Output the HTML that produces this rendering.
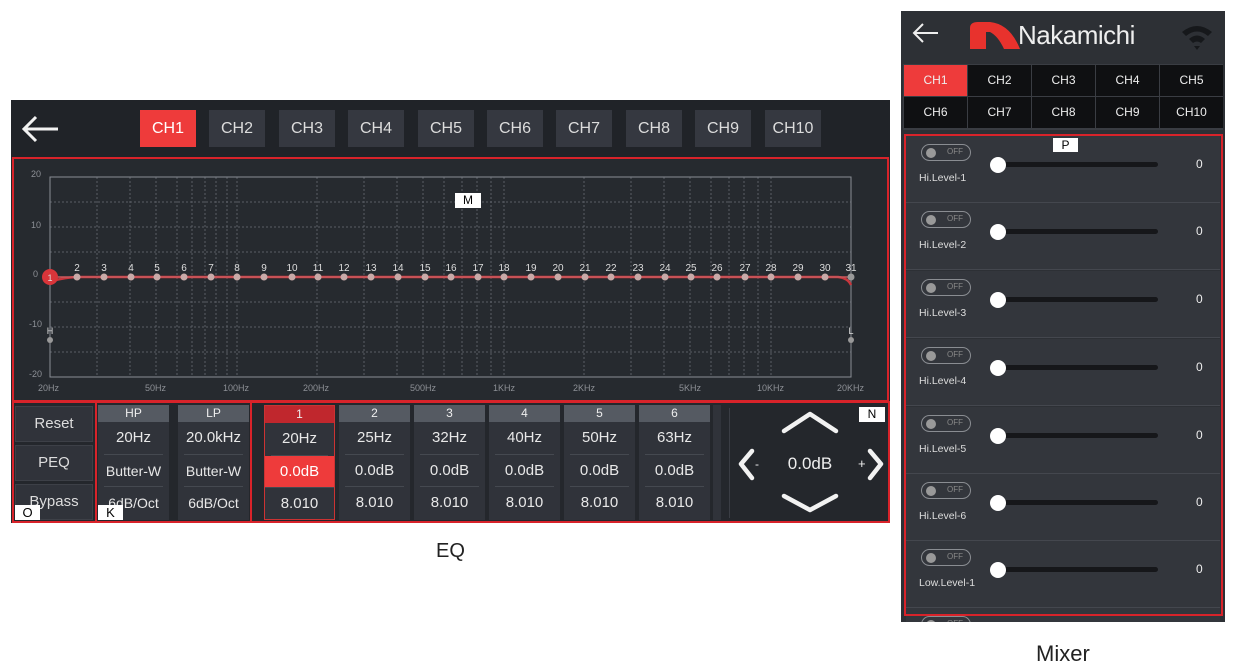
<!DOCTYPE html>
<html><head><meta charset="utf-8"><style>
*{margin:0;padding:0;box-sizing:border-box}
body{width:1233px;height:672px;background:#fff;position:relative;overflow:hidden;font-family:"Liberation Sans",sans-serif;color:#e6e6e6}
.a{position:absolute}
.ch{position:absolute;top:110px;width:56px;height:37px;background:#353840;font-size:16px;line-height:37px;text-align:center;color:#dcdcdc}
.btn{position:absolute;left:15px;width:78px;height:36px;background:#30333a;border:1px solid #3d4047;font-size:15px;line-height:34px;text-align:center;color:#ddd}
.col{position:absolute;top:405px;width:71px;height:115px;background:#30333a}
.col .h{height:17px;background:#555a62;font-size:12px;line-height:17px;text-align:center;color:#eee}
.col .r{height:32.5px;font-size:15px;line-height:32px;text-align:center;border-bottom:1px solid #454950;margin:0 6px;color:#e8e8e8}
.col .r.l{border:none}
.col .r.s{font-size:14px}
.mc{position:absolute;width:63px;height:31px;background:#0f1012;font-size:12px;line-height:31px;text-align:center;color:#eee}
.row{position:absolute;left:906px;width:314px;height:67px;background:#33363c;border-bottom:1px solid #44474e}
.tg{position:absolute;left:15px;top:8px;width:50px;height:17px;border:1.5px solid #8a8d92;border-radius:9px}
.tg i{position:absolute;left:4px;top:2.5px;width:10px;height:10px;border-radius:50%;background:#999}
.tg b{position:absolute;left:25px;top:2px;font-size:8px;font-weight:normal;color:#888}
.lb{position:absolute;left:13px;top:36px;font-size:10.5px;color:#ddd}
.tr{position:absolute;left:92px;top:26px;width:160px;height:5px;border-radius:3px;background:#16171a}
.kn{position:absolute;left:84px;top:21px;width:16px;height:16px;border-radius:50%;background:#fff}
.vl{position:absolute;left:290px;top:21px;font-size:12px;color:#eee}
</style></head><body>
<div class="a" style="left:11px;top:100px;width:879px;height:423px;background:#24272c"></div>
<div class="a" style="left:11px;top:100px;width:879px;height:57px;background:#202328"></div>
<svg class="a" style="left:22px;top:115px" width="38" height="28" viewBox="0 0 38 28"><path d="M2 14H36M14 2L2 14L14 26" fill="none" stroke="#f2f2f2" stroke-width="3"/></svg>
<div class="ch" style="left:140px;background:#ee3b3b;color:#fff">CH1</div>
<div class="ch" style="left:209px">CH2</div>
<div class="ch" style="left:279px">CH3</div>
<div class="ch" style="left:348px">CH4</div>
<div class="ch" style="left:418px">CH5</div>
<div class="ch" style="left:487px">CH6</div>
<div class="ch" style="left:556px">CH7</div>
<div class="ch" style="left:626px">CH8</div>
<div class="ch" style="left:695px">CH9</div>
<div class="ch" style="left:765px">CH10</div>
<div class="a" style="left:12px;top:157px;width:877px;height:245px;border:2px solid #d8232a;background:#262a2f"></div>

<svg class="a" style="left:0;top:0" width="1233" height="672">
<g stroke="#5a5e66" stroke-width="1" stroke-dasharray="2,2">
<line x1="50" y1="202" x2="851" y2="202"/><line x1="50" y1="227" x2="851" y2="227"/><line x1="50" y1="252" x2="851" y2="252"/><line x1="50" y1="302" x2="851" y2="302"/><line x1="50" y1="327" x2="851" y2="327"/><line x1="50" y1="352" x2="851" y2="352"/>
<line x1="97" y1="177" x2="97" y2="377"/><line x1="130" y1="177" x2="130" y2="377"/><line x1="156" y1="177" x2="156" y2="377"/><line x1="177" y1="177" x2="177" y2="377"/><line x1="192" y1="177" x2="192" y2="377"/><line x1="205" y1="177" x2="205" y2="377"/><line x1="216" y1="177" x2="216" y2="377"/><line x1="227" y1="177" x2="227" y2="377"/><line x1="237" y1="177" x2="237" y2="377"/>
<line x1="317" y1="177" x2="317" y2="377"/><line x1="364" y1="177" x2="364" y2="377"/><line x1="397" y1="177" x2="397" y2="377"/><line x1="423" y1="177" x2="423" y2="377"/><line x1="444" y1="177" x2="444" y2="377"/><line x1="462" y1="177" x2="462" y2="377"/><line x1="477" y1="177" x2="477" y2="377"/><line x1="491" y1="177" x2="491" y2="377"/><line x1="504" y1="177" x2="504" y2="377"/>
<line x1="584" y1="177" x2="584" y2="377"/><line x1="631" y1="177" x2="631" y2="377"/><line x1="664" y1="177" x2="664" y2="377"/><line x1="690" y1="177" x2="690" y2="377"/><line x1="711" y1="177" x2="711" y2="377"/><line x1="729" y1="177" x2="729" y2="377"/><line x1="744" y1="177" x2="744" y2="377"/><line x1="758" y1="177" x2="758" y2="377"/><line x1="771" y1="177" x2="771" y2="377"/>
</g>
<rect x="50" y="177" width="801" height="200" fill="none" stroke="#8a8e95" stroke-width="1"/>
<g font-size="9" fill="#8d9096" font-family="Liberation Sans"><text x="31" y="177">20</text><text x="31" y="228">10</text><text x="33" y="277">0</text><text x="29" y="327">-10</text><text x="29" y="377">-20</text>
<text x="38" y="391">20Hz</text><text x="145" y="391">50Hz</text><text x="223" y="391">100Hz</text><text x="303" y="391">200Hz</text><text x="410" y="391">500Hz</text><text x="493" y="391">1KHz</text><text x="573" y="391">2KHz</text><text x="679" y="391">5KHz</text><text x="757" y="391">10KHz</text><text x="837" y="391">20KHz</text></g>
<path d="M50 282 Q60 278 77 277 L838 277 Q848 278 851 285" fill="none" stroke="#c9363d" stroke-width="2.5"/>
<line x1="50" y1="277" x2="851" y2="277" stroke="#c85a5e" stroke-width="1.5"/>
<g fill="#c8aaa8">
<circle cx="77" cy="277" r="3.5"/><circle cx="104" cy="277" r="3.5"/><circle cx="131" cy="277" r="3.5"/><circle cx="157" cy="277" r="3.5"/><circle cx="184" cy="277" r="3.5"/><circle cx="211" cy="277" r="3.5"/><circle cx="237" cy="277" r="3.5"/><circle cx="264" cy="277" r="3.5"/><circle cx="292" cy="277" r="3.5"/><circle cx="318" cy="277" r="3.5"/><circle cx="344" cy="277" r="3.5"/><circle cx="371" cy="277" r="3.5"/><circle cx="398" cy="277" r="3.5"/><circle cx="425" cy="277" r="3.5"/><circle cx="451" cy="277" r="3.5"/><circle cx="478" cy="277" r="3.5"/><circle cx="504" cy="277" r="3.5"/><circle cx="531" cy="277" r="3.5"/><circle cx="558" cy="277" r="3.5"/><circle cx="585" cy="277" r="3.5"/><circle cx="611" cy="277" r="3.5"/><circle cx="638" cy="277" r="3.5"/><circle cx="665" cy="277" r="3.5"/><circle cx="691" cy="277" r="3.5"/><circle cx="717" cy="277" r="3.5"/><circle cx="745" cy="277" r="3.5"/><circle cx="771" cy="277" r="3.5"/><circle cx="798" cy="277" r="3.5"/><circle cx="825" cy="277" r="3.5"/><circle cx="851" cy="277" r="3.5" fill="#999"/>
<circle cx="50" cy="340" r="3" fill="#999"/><circle cx="851" cy="340" r="3" fill="#999"/></g>
<circle cx="50" cy="277" r="8" fill="#d9353a"/>
<g font-size="10" fill="#ddd" font-family="Liberation Sans" text-anchor="middle">
<text x="50" y="281" font-size="9">1</text><text x="77" y="271">2</text><text x="104" y="271">3</text><text x="131" y="271">4</text><text x="157" y="271">5</text><text x="184" y="271">6</text><text x="211" y="271">7</text><text x="237" y="271">8</text><text x="264" y="271">9</text><text x="292" y="271">10</text><text x="318" y="271">11</text><text x="344" y="271">12</text><text x="371" y="271">13</text><text x="398" y="271">14</text><text x="425" y="271">15</text><text x="451" y="271">16</text><text x="478" y="271">17</text><text x="504" y="271">18</text><text x="531" y="271">19</text><text x="558" y="271">20</text><text x="585" y="271">21</text><text x="611" y="271">22</text><text x="638" y="271">23</text><text x="665" y="271">24</text><text x="691" y="271">25</text><text x="717" y="271">26</text><text x="745" y="271">27</text><text x="771" y="271">28</text><text x="798" y="271">29</text><text x="825" y="271">30</text><text x="851" y="271">31</text>
<text x="50" y="334" font-size="9">H</text><text x="851" y="334" font-size="9">L</text></g>
</svg>
<div class="a" style="left:455px;top:193px;width:26px;height:15px;background:#fff;color:#000;font-size:12px;line-height:15px;text-align:center">M</div>

<div class="a" style="left:12px;top:401px;width:878px;height:122px;border:2px solid #d8232a"></div>
<div class="a" style="left:95px;top:401px;width:2px;height:121px;background:#d8232a"></div>
<div class="a" style="left:250px;top:401px;width:2px;height:121px;background:#d8232a"></div>
<div class="btn" style="top:406px">Reset</div>
<div class="btn" style="top:445px">PEQ</div>
<div class="btn" style="top:484px">Bypass</div>
<div class="col" style="left:98px"><div class="h">HP</div><div class="r">20Hz</div><div class="r s">Butter-W</div><div class="r l s">6dB/Oct</div></div>
<div class="col" style="left:178px"><div class="h">LP</div><div class="r">20.0kHz</div><div class="r s">Butter-W</div><div class="r l s">6dB/Oct</div></div>
<div class="a" style="left:15px;top:505px;width:25px;height:15px;background:#fff;color:#000;font-size:13px;line-height:15px;text-align:center">O</div>
<div class="a" style="left:98px;top:505px;width:25px;height:15px;background:#fff;color:#000;font-size:13px;line-height:15px;text-align:center">K</div>
<div class="col" style="left:264px;border:1px solid #c33"><div class="h" style="background:#c0272d">1</div><div class="r">20Hz</div><div class="r" style="background:#ee3b3b;margin:0;color:#fff">0.0dB</div><div class="r l">8.010</div></div>
<div class="col" style="left:339px"><div class="h">2</div><div class="r">25Hz</div><div class="r">0.0dB</div><div class="r l">8.010</div></div>
<div class="col" style="left:414px"><div class="h">3</div><div class="r">32Hz</div><div class="r">0.0dB</div><div class="r l">8.010</div></div>
<div class="col" style="left:489px"><div class="h">4</div><div class="r">40Hz</div><div class="r">0.0dB</div><div class="r l">8.010</div></div>
<div class="col" style="left:564px"><div class="h">5</div><div class="r">50Hz</div><div class="r">0.0dB</div><div class="r l">8.010</div></div>
<div class="col" style="left:639px"><div class="h">6</div><div class="r">63Hz</div><div class="r">0.0dB</div><div class="r l">8.010</div></div>
<div class="a" style="left:713px;top:405px;width:8px;height:115px;background:#30333a"></div>
<div class="a" style="left:729px;top:408px;width:1px;height:110px;background:#3a3d44"></div>
<svg class="a" style="left:730px;top:405px" width="158" height="115">
<g fill="none" stroke="#f2f2f2" stroke-width="4.5" stroke-linecap="round" stroke-linejoin="round"><path d="M54 26L80 9L106 26"/><path d="M54 91L80 105L106 91"/><path d="M22 46L11 59L22 73"/><path d="M140 46L151 59L140 73"/></g>
<text x="25" y="63" font-size="12" fill="#eee" font-family="Liberation Sans">-</text><text x="128" y="63" font-size="13" fill="#eee" font-family="Liberation Sans">+</text>
<text x="80" y="64" font-size="17" fill="#eee" text-anchor="middle" font-family="Liberation Sans">0.0dB</text></svg>
<div class="a" style="left:859px;top:407px;width:26px;height:15px;background:#fff;color:#000;font-size:12px;line-height:15px;text-align:center">N</div>
<div class="a" style="left:436px;top:540px;font-size:20px;color:#222">EQ</div>

<div class="a" style="left:901px;top:11px;width:324px;height:611px;background:#2d3035"></div>
<svg class="a" style="left:912px;top:22px" width="28" height="22"><path d="M2 11H26M11 2L2 11L11 20" fill="none" stroke="#eee" stroke-width="2"/></svg>
<svg class="a" style="left:970px;top:22px" width="50" height="27"><path d="M0 27V6Q0 0 8 0H20Q40 2 50 27H34Q28 14 20 10H16V27Z" fill="#e8322d"/></svg>
<div class="a" style="left:1018px;top:20px;font-size:26px;color:#eee;letter-spacing:-0.5px">Nakamichi</div>
<svg class="a" style="left:1180px;top:23px" width="34" height="28"><path d="M2 9Q17 -3 32 9L28 13Q17 4 6 13Z M9 16Q17 9 25 16L21 20Q17 17 13 20Z M14 23L17 27L20 23Z" fill="#16181b"/></svg>
<div class="a" style="left:903px;top:64px;width:320px;height:66px;background:#3a3d43"></div>
<div class="mc" style="left:904px;top:65px;background:#ee3b3b">CH1</div>
<div class="mc" style="left:968px;top:65px">CH2</div>
<div class="mc" style="left:1032px;top:65px">CH3</div>
<div class="mc" style="left:1096px;top:65px">CH4</div>
<div class="mc" style="left:1160px;top:65px">CH5</div>
<div class="mc" style="left:904px;top:97px">CH6</div>
<div class="mc" style="left:968px;top:97px">CH7</div>
<div class="mc" style="left:1032px;top:97px">CH8</div>
<div class="mc" style="left:1096px;top:97px">CH9</div>
<div class="mc" style="left:1160px;top:97px">CH10</div>

<div class="row" style="top:136px"><div class="tg"><i></i><b>OFF</b></div><div class="lb">Hi.Level-1</div><div class="tr"></div><div class="kn"></div><div class="vl">0</div></div>
<div class="row" style="top:203px"><div class="tg"><i></i><b>OFF</b></div><div class="lb">Hi.Level-2</div><div class="tr"></div><div class="kn"></div><div class="vl">0</div></div>
<div class="row" style="top:271px"><div class="tg"><i></i><b>OFF</b></div><div class="lb">Hi.Level-3</div><div class="tr"></div><div class="kn"></div><div class="vl">0</div></div>
<div class="row" style="top:339px"><div class="tg"><i></i><b>OFF</b></div><div class="lb">Hi.Level-4</div><div class="tr"></div><div class="kn"></div><div class="vl">0</div></div>
<div class="row" style="top:407px"><div class="tg"><i></i><b>OFF</b></div><div class="lb">Hi.Level-5</div><div class="tr"></div><div class="kn"></div><div class="vl">0</div></div>
<div class="row" style="top:474px"><div class="tg"><i></i><b>OFF</b></div><div class="lb">Hi.Level-6</div><div class="tr"></div><div class="kn"></div><div class="vl">0</div></div>
<div class="row" style="top:541px"><div class="tg"><i></i><b>OFF</b></div><div class="lb">Low.Level-1</div><div class="tr"></div><div class="kn"></div><div class="vl">0</div></div>
<div class="row" style="top:608px;height:14px;border:none;overflow:hidden"><div class="tg"><i></i><b>OFF</b></div></div>
<div class="a" style="left:904px;top:134px;width:319px;height:482px;border:2px solid #d8232a"></div>
<div class="a" style="left:1053px;top:138px;width:25px;height:14px;background:#fff;color:#000;font-size:12px;line-height:14px;text-align:center">P</div>
<div class="a" style="left:1036px;top:641px;font-size:22px;color:#222">Mixer</div>
</body></html>
